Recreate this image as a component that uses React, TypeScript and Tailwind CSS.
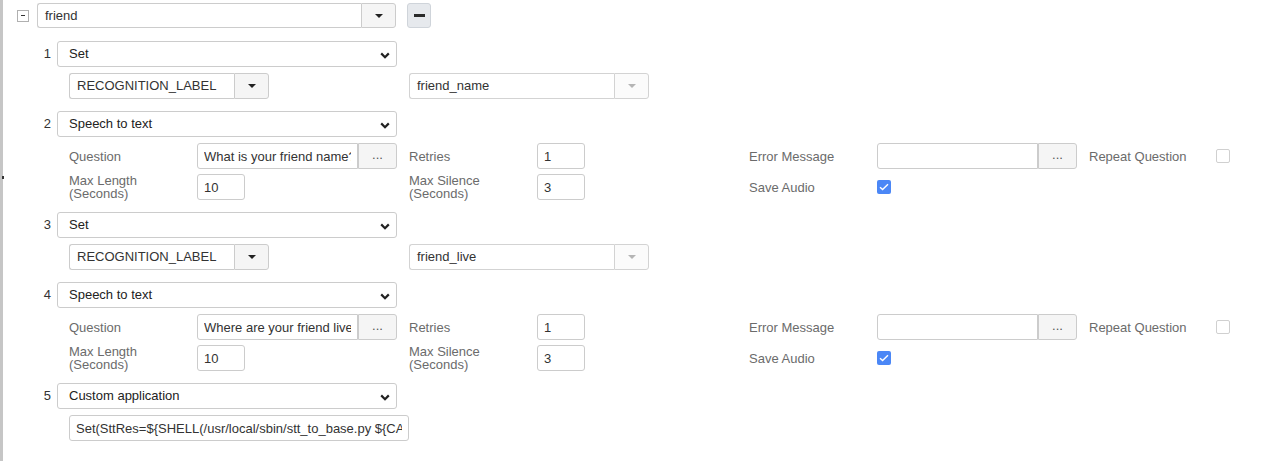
import React from "react";

type Step =
  | { n: number; kind: "set"; label: string; value: string }
  | { n: number; kind: "stt"; question: string }
  | { n: number; kind: "custom"; app: string };

const steps: Step[] = [
  { n: 1, kind: "set", label: "RECOGNITION_LABEL", value: "friend_name" },
  { n: 2, kind: "stt", question: "What is your friend name?" },
  { n: 3, kind: "set", label: "RECOGNITION_LABEL", value: "friend_live" },
  { n: 4, kind: "stt", question: "Where are your friend live?" },
  { n: 5, kind: "custom", app: "Set(SttRes=${SHELL(/usr/local/sbin/stt_to_base.py ${CALLERID(num)})})" },
];

const stepTitle = { set: "Set", stt: "Speech to text", custom: "Custom application" };

function Caret({ light }: { light?: boolean }) {
  return (
    <svg width="8" height="4" viewBox="0 0 8 4">
      <path d="M0 0h8L4 4z" fill={light ? "#b5b5b5" : "#222"} />
    </svg>
  );
}

function Chevron() {
  return (
    <svg width="10" height="7" viewBox="0 0 10 7" className="absolute right-[6px] top-[10px]">
      <path d="M1.2 1.4 5 5.2l3.8-3.8" fill="none" stroke="#222" strokeWidth="2.2" />
    </svg>
  );
}

function Select({ text }: { text: string }) {
  return (
    <div className="relative w-[340px] h-[26px] border border-[#ccc] rounded-[3px] bg-white text-[#222] pl-[11px] leading-[24px]">
      {text}
      <Chevron />
    </div>
  );
}

function Combo({ text, w, light }: { text: string; w: string; light?: boolean }) {
  return (
    <div className={`flex h-[26px] ${w}`}>
      <div className={`flex-1 border ${light ? "border-[#d3d3d3]" : "border-[#ccc]"} border-r-0 rounded-l-[3px] bg-white pl-[7px] leading-[24px] text-[#333]`}>
        {text}
      </div>
      <div className={`w-[35px] flex items-center justify-center border rounded-r-[3px] ${light ? "border-[#d3d3d3] bg-[#fbfbfb]" : "border-[#ccc] bg-[#f5f5f5]"}`}>
        <Caret light={light} />
      </div>
    </div>
  );
}

function TextInput({ value, w }: { value: string; w: string }) {
  return (
    <input
      readOnly
      defaultValue={value}
      className={`${w} h-[26px] border border-[#ccc] rounded-[3px] px-[6px] text-[#333] outline-none bg-white`}
    />
  );
}

function DotsInput({ value, w }: { value: string; w: string }) {
  return (
    <div className="flex h-[26px]">
      <input
        readOnly
        defaultValue={value}
        className={`${w} h-[26px] border border-[#ccc] rounded-l-[3px] px-[6px] text-[#333] outline-none bg-white`}
      />
      <div className="w-[39px] border border-[#ccc] rounded-r-[3px] bg-[#f5f5f5] text-[#555] text-center leading-[22px]">...</div>
    </div>
  );
}

function Check({ on }: { on?: boolean }) {
  return on ? (
    <div className="w-[14px] h-[14px] rounded-[2px] bg-[#4b87f6] flex items-center justify-center">
      <svg width="10" height="8" viewBox="0 0 10 8">
        <path d="M1 4.2 3.6 6.6 9 1.2" fill="none" stroke="#fff" strokeWidth="1.4" />
      </svg>
    </div>
  ) : (
    <div className="w-[14px] h-[14px] rounded-[2px] border border-[#d0d0d0] bg-white" />
  );
}

function Field({ label, children, two, last }: { label: string; children: React.ReactNode; two?: string; last?: boolean }) {
  return (
    <div className={`flex items-center ${last ? "" : "w-[340px]"}`}>
      <div className="w-[128px] text-[#6b6b6b] leading-[13px]">
        {label}
        {two && <br />}
        {two}
      </div>
      {children}
    </div>
  );
}

export default function App() {
  return (
    <div className="flex h-[461px] overflow-hidden bg-white text-[13px] font-['Liberation_Sans',Arial,sans-serif]">
      <div className="relative w-[3px] bg-[#c6c6c6] shrink-0">
        <div className="absolute left-[2px] top-[176px] w-[2px] h-[3px] bg-[#333]" />
      </div>
      <div className="pl-[14px] pt-[3px]">
        <div className="flex items-center h-[25px]">
          <div className="w-[12px] h-[12px] border border-[#b0b0b0] bg-white flex items-center justify-center mr-[8px]">
            <div className="w-[4px] h-[1px] bg-[#333]" />
          </div>
          <div className="flex h-[25px] w-[359px]">
            <div className="flex-1 border border-[#ccc] border-r-0 rounded-l-[3px] bg-white pl-[7px] leading-[23px] text-[#333]">friend</div>
            <div className="w-[35px] flex items-center justify-center border border-[#ccc] rounded-r-[3px] bg-[#f5f5f5]">
              <Caret />
            </div>
          </div>
          <div className="ml-[11px] w-[24px] h-[25px] border border-[#cfd4da] rounded-[3px] bg-[#e6e9ed] flex items-center justify-center">
            <div className="w-[11px] h-[3px] bg-[#2a2a2a]" />
          </div>
        </div>

        <div className="ml-[20px] mt-[13px] flex flex-col gap-[12px]">
          {steps.map((s) => (
            <div key={s.n} className="flex flex-col gap-[6px]">
              <div className="flex items-center">
                <div className="w-[20px] pr-[6px] text-right text-[#333]">{s.n}</div>
                <Select text={stepTitle[s.kind]} />
              </div>
              {s.kind === "set" && (
                <div className="flex items-center ml-[32px]">
                  <div className="w-[340px]">
                    <Combo text={s.label} w="w-[200px]" />
                  </div>
                  <Combo text={s.value} w="w-[240px]" light />
                </div>
              )}
              {s.kind === "stt" && (
                <div className="ml-[32px] flex flex-col gap-[5px]">
                  <div className="flex items-center">
                    <Field label="Question">
                      <DotsInput value={s.question} w="w-[161px]" />
                    </Field>
                    <Field label="Retries">
                      <TextInput value="1" w="w-[48px]" />
                    </Field>
                    <Field label="Error Message">
                      <DotsInput value="" w="w-[161px]" />
                    </Field>
                    <Field label="Repeat Question" last>
                      <div className="ml-[-1px]"><Check /></div>
                    </Field>
                  </div>
                  <div className="flex items-center">
                    <Field label="Max Length" two="(Seconds)">
                      <TextInput value="10" w="w-[48px]" />
                    </Field>
                    <Field label="Max Silence" two="(Seconds)">
                      <TextInput value="3" w="w-[48px]" />
                    </Field>
                    <Field label="Save Audio" last>
                      <Check on />
                    </Field>
                  </div>
                </div>
              )}
              {s.kind === "custom" && (
                <div className="ml-[32px]">
                  <TextInput value={s.app} w="w-[340px]" />
                </div>
              )}
            </div>
          ))}
        </div>
      </div>
    </div>
  );
}
